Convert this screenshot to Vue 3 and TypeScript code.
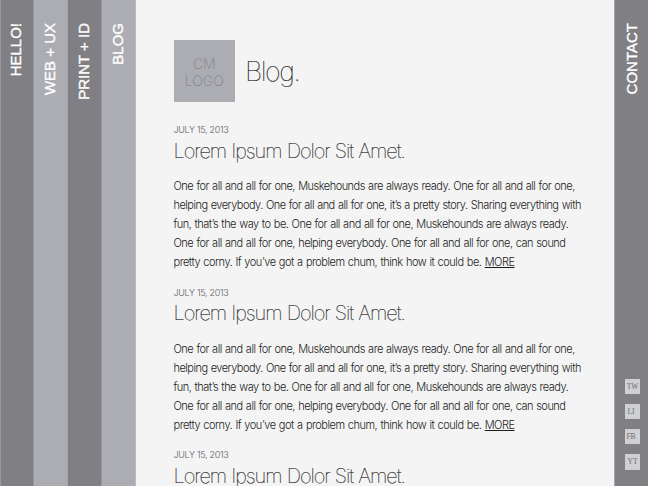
<script setup lang="ts">
interface Tab { label: string; tone: string }

const tabs: Tab[] = [
  { label: 'HELLO!', tone: 'dark' },
  { label: 'WEB + UX', tone: 'light' },
  { label: 'PRINT + ID', tone: 'dark' },
  { label: 'BLOG', tone: 'light' },
]

const lines: string[] = [
  'One for all and all for one, Muskehounds are always ready. One for all and all for one,',
  'helping everybody. One for all and all for one, it’s a pretty story. Sharing everything with',
  'fun, that’s the way to be. One for all and all for one, Muskehounds are always ready.',
  'One for all and all for one, helping everybody. One for all and all for one, can sound',
  'pretty corny. If you’ve got a problem chum, think how it could be.',
]

const posts: number[] = [1, 2, 3]
const socials: string[] = ['TW', 'LI', 'FB', 'YT']
</script>

<template>
  <div class="page">
    <nav class="tabs">
      <a v-for="tab in tabs" :key="tab.label" class="tab" :class="tab.tone"><span>{{ tab.label }}</span></a>
    </nav>
    <main class="content">
      <header class="head">
        <div class="logo">CM<br />LOGO</div>
        <h1>Blog.</h1>
      </header>
      <article v-for="post in posts" :key="post" class="post">
        <time>JULY 15, 2013</time>
        <h2>Lorem Ipsum Dolor Sit Amet.</h2>
        <p v-if="post < posts.length">
          <span v-for="(line, i) in lines" :key="i" class="line">{{ line }}<template v-if="i === lines.length - 1">&nbsp;<a class="more">MORE</a></template></span>
        </p>
      </article>
    </main>
    <aside class="contact dark">
      <a class="vertical"><span>CONTACT</span></a>
      <ul>
        <li v-for="s in socials" :key="s">{{ s }}</li>
      </ul>
    </aside>
  </div>
</template>

<style>
html, body { margin: 0; overflow: hidden; }
</style>

<style scoped>
.page {
  display: flex;
  width: 648px;
  height: 486px;
  overflow: hidden;
  background: #f4f4f4;
  color: #1c1c1c;
  font-family: Inter, "Liberation Sans", sans-serif;
}
.tabs { display: flex; flex: none; width: 136px; }
.tab {
  display: flex;
  box-sizing: border-box;
  width: 34px;
  padding: 23px 2px 0 0;
  border-right: 1px solid #97969b;
  justify-content: center;
}
.tab.light { border-right-color: #a3a3a8; }
.tab:last-child { border-right-color: #bbbcc0; }
.tab:first-child { border-left: 1px solid #97969b; }
.dark { background: #807f84; }
.light { background: #acadb2; }
.tab span, .vertical span {
  writing-mode: vertical-rl;
  transform: rotate(180deg);
  align-self: flex-start;
  color: #fff;
  font: 500 15px/20px "Liberation Sans", sans-serif;
  -webkit-text-stroke: 0.35px #fff;
  white-space: nowrap;
}
.content { flex: 1; min-width: 0; padding: 40px 0 0 37.5px; }
.head { display: flex; height: 62px; }
.logo {
  box-sizing: border-box;
  width: 61.5px;
  height: 62px;
  padding-top: 15px;
  background: #acadb2;
  color: #807f84;
  font-size: 14px;
  font-weight: 200;
  line-height: 17px;
  text-align: center;
}
h1 {
  margin: 14px 0 0 10px;
  font-size: 27px;
  font-weight: 100;
  line-height: 36px;
  letter-spacing: -1.5px;
  -webkit-text-stroke: 0.2px #1c1c1c;
}
.post { height: 162.6px; }
.post:nth-of-type(1) { margin-top: 22px; }
time {
  display: block;
  color: #606064;
  font-size: 9px;
  font-weight: 300;
  line-height: 12px;
  letter-spacing: -0.3px;
}
h2 {
  margin: 1.5px 0 0;
  font-size: 20px;
  font-weight: 100;
  line-height: 26px;
  letter-spacing: -1.03px;
  word-spacing: 0.5px;
  -webkit-text-stroke: 0.2px #1c1c1c;
  white-space: nowrap;
}
p { margin: 13.5px 0 0; }
.line {
  display: block;
  font-size: 11px;
  font-weight: 300;
  line-height: 19px;
  letter-spacing: -0.5px;
  word-spacing: 0.62px;
  white-space: nowrap;
}
.line:nth-child(2) { letter-spacing: -0.525px; }
.line:last-child { letter-spacing: -0.48px; }
.more { text-decoration: underline; text-decoration-thickness: 1px; text-underline-offset: 1px; }
.contact {
  display: flex;
  flex: none;
  flex-direction: column;
  align-items: center;
  box-sizing: border-box;
  width: 34px;
  padding: 23px 0 16.5px;
  border-left: 1px solid #a5a4a9;
}
ul { display: grid; gap: 10px; margin: auto 0 0; padding: 0 0 0 2px; list-style: none; }
li {
  box-sizing: border-box;
  width: 15.5px;
  height: 15.2px;
  background: #cfd0d3;
  color: #6c6b70;
  font: 7.5px/16px "Liberation Serif", serif;
  text-align: center;
}
li:nth-child(2), li:nth-child(3) { padding-right: 3px; }
</style>
